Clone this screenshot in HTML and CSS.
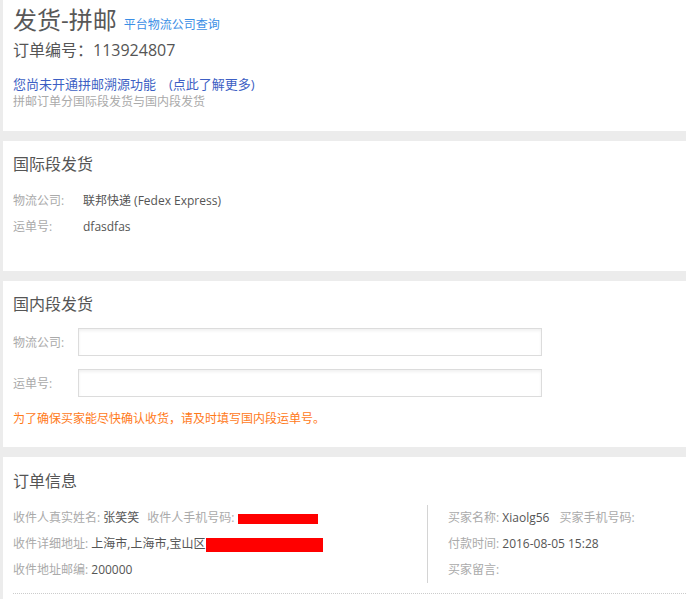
FILE: index.html
```html
<!DOCTYPE html>
<html lang="zh-CN">
<head>
<meta charset="utf-8">
<title>发货-拼邮</title>
<link rel="stylesheet" href="styles.css">
</head>
<body>
<div class="page">
  <section class="panel panel-head">
    <div class="title-row">
      <h1 class="title">发货-拼邮</h1>
      <a class="link-query" href="#">平台物流公司查询</a>
    </div>
    <div class="order-no">订单编号：113924807</div>
    <a class="link-trace" href="#">您尚未开通拼邮溯源功能<span class="gap"></span>(点此了解更多)</a>
    <div class="hint">拼邮订单分国际段发货与国内段发货</div>
  </section>

  <section class="panel panel-intl">
    <h2 class="sec-title">国际段发货</h2>
    <div class="rows">
      <div class="row"><span class="label w70">物流公司:</span><span class="value">联邦快递 (Fedex Express)</span></div>
      <div class="row"><span class="label w70">运单号:</span><span class="value">dfasdfas</span></div>
    </div>
  </section>

  <section class="panel panel-dom">
    <h2 class="sec-title">国内段发货</h2>
    <div class="form">
      <div class="field"><span class="label w65">物流公司:</span><input class="input" type="text"></div>
      <div class="field"><span class="label w65">运单号:</span><input class="input" type="text"></div>
    </div>
    <div class="warn">为了确保买家能尽快确认收货，请及时填写国内段运单号。</div>
  </section>

  <section class="panel panel-order">
    <h2 class="sec-title">订单信息</h2>
    <div class="info">
      <div class="info-left">
        <div class="row"><span class="label">收件人真实姓名:</span> <span class="value mr8">张笑笑</span><span class="label">收件人手机号码:</span> <span class="redact r1"></span></div>
        <div class="row"><span class="label">收件详细地址:</span> <span class="value">上海市,上海市,宝山区</span><span class="redact r2"></span></div>
        <div class="row"><span class="label">收件地址邮编:</span> <span class="value">200000</span></div>
      </div>
      <div class="info-right">
        <div class="row"><span class="label">买家名称:</span> <span class="value mr10">Xiaolg56</span><span class="label">买家手机号码:</span></div>
        <div class="row"><span class="label">付款时间:</span> <span class="value">2016-08-05 15:28</span></div>
        <div class="row"><span class="label">买家留言:</span></div>
      </div>
    </div>
    <div class="dots"></div>
  </section>
</div>
</body>
</html>
```
FILE: styles.css
```css
* { box-sizing: border-box; }
html, body {
  margin: 0;
  padding: 0;
  background: #ececec;
}
body {
  font-family: "Open Sans", "Noto Sans CJK SC", sans-serif;
  font-size: 12px;
  color: #555;
}
.page {
  margin-left: 3px;
}
.panel {
  background: #fff;
  padding-left: 10px;
  margin-bottom: 10px;
}
h1, h2 { margin: 0; font-weight: normal; }
a { text-decoration: none; }

.panel-head { padding-top: 5px; padding-bottom: 20px; }
.title-row {
  display: flex;
  align-items: baseline;
  gap: 7px;
  height: 30px;
}
.title {
  font-size: 24px;
  line-height: 30px;
  color: #585858;
}
.link-query {
  font-size: 12px;
  color: #3a8ee6;
}
.order-no {
  margin-top: 5px;
  font-size: 16px;
  line-height: 20px;
  color: #555;
}
.link-trace {
  display: block;
  margin-top: 15px;
  font-size: 13px;
  line-height: 18px;
  color: #3d5fc4;
}
.gap { display: inline-block; width: 13px; }
.hint {
  font-size: 12px;
  line-height: 18px;
  color: #aaa;
}

.sec-title {
  font-size: 16px;
  line-height: 20px;
  color: #555;
}
.panel-intl { padding-top: 13px; padding-bottom: 31px; }
.panel-intl .rows { margin-top: 14px; }
.row {
  line-height: 26px;
  height: 26px;
  white-space: nowrap;
}
.label { color: #aaa; }
.value { color: #555; }
.w70 { display: inline-block; width: 70px; }
.w65 { display: inline-block; width: 65px; }
.mr8 { margin-right: 8px; }
.mr10 { margin-right: 10px; }

.panel-dom { padding-top: 13px; padding-bottom: 19px; }
.form {
  margin-top: 14px;
  display: flex;
  flex-direction: column;
  gap: 13px;
}
.field {
  display: flex;
  align-items: center;
  height: 28px;
}
.input {
  width: 464px;
  height: 28px;
  border: 1px solid #dcdcdc;
  box-shadow: inset 0 2px 3px rgba(0, 0, 0, 0.06);
  background: #fff;
  margin: 0;
  padding: 0 6px;
  outline: none;
}
.warn {
  margin-top: 13px;
  line-height: 18px;
  color: #ff7a1a;
}

.panel-order { padding-top: 14px; padding-bottom: 20px; }
.info {
  margin-top: 14px;
  display: flex;
}
.info-left {
  width: 415px;
  border-right: 1px solid #d4d4d4;
}
.info-right {
  padding-left: 20px;
}
.redact {
  display: inline-block;
  background: #ff0000;
  vertical-align: middle;
}
.r1 { width: 80px; height: 10px; }
.r2 { width: 117px; height: 14px; }
.dots {
  margin-top: 10px;
  border-top: 1px dotted #ccc;
  height: 20px;
}
```
